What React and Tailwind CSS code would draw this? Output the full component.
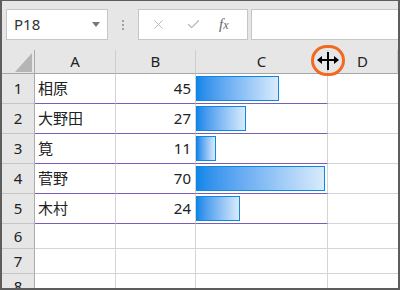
import { X, Check } from 'lucide-react';

const rows = [
  { n: 1, name: '相原', v: 45 },
  { n: 2, name: '大野田', v: 27 },
  { n: 3, name: '筧', v: 11 },
  { n: 4, name: '菅野', v: 70 },
  { n: 5, name: '木村', v: 24 },
];

const font = { fontFamily: '"Noto Sans", "Noto Sans CJK JP", sans-serif' };

function RowHead({ n, h }) {
  return (
    <div className={`${h} flex items-center justify-center bg-[#e6e6e6] border-r border-b border-r-[#ababab] border-b-[#c4c4c4] text-[15px] text-[#222]`}>
      {n}
    </div>
  );
}

export default function App() {
  return (
    <div
      className="relative w-[400px] h-[290px] overflow-hidden bg-[#e6e6e6] border-t border-l-2 border-r-2 border-b-2 border-[#5d5d5d] flex flex-col"
      style={font}
    >
      {/* ツールバー */}
      <div className="flex items-start pt-[8px] pb-[10px] h-[49px] shrink-0">
        <div className="ml-[4px] w-[102px] h-[31px] bg-white border border-[#c6c6c6] flex items-center pl-[7px] pr-[7px] text-[15px] text-[#333]">
          <span className="flex-1">P18</span>
          <span className="w-0 h-0 border-l-[4px] border-r-[4px] border-t-[5px] border-l-transparent border-r-transparent border-t-[#777]" />
        </div>
        <div className="w-[30px] h-[31px] flex flex-col items-center justify-center gap-[2px]">
          <span className="w-[2px] h-[2px] bg-[#a0a0a0]" />
          <span className="w-[2px] h-[2px] bg-[#a0a0a0]" />
          <span className="w-[2px] h-[2px] bg-[#a0a0a0]" />
        </div>
        <div className="w-[110px] h-[31px] bg-white border border-[#c6c6c6] flex items-center pl-[12px] text-[#b8b8b8]">
          <X size={15} strokeWidth={1.5} />
          <Check size={15} strokeWidth={2} className="ml-[20px]" />
          <span className="ml-[18px] text-[15px] italic text-[#666]" style={{ fontFamily: '"Liberation Serif", serif' }}>
            f<span className="text-[12px]">x</span>
          </span>
        </div>
        <div className="ml-[3px] flex-1 h-[31px] bg-white border-t border-b border-l border-[#c6c6c6]" />
      </div>

      {/* シート */}
      <div className="flex-1 bg-white grid grid-cols-[33px_81px_80px_132px_1fr] content-start text-[15px] text-[#222]">
        {/* 列見出し */}
        <div className="h-[24px] bg-[#e6e6e6] border-r border-b border-r-[#ababab] border-b-[#a6a6a6] flex items-end justify-end pr-[2px] pb-[1px]">
          <span className="w-[17px] h-[19px] bg-[#b5b5b5] [clip-path:polygon(100%_0,100%_100%,0_100%)]" />
        </div>
        {['A', 'B', 'C', 'D'].map((c) => (
          <div key={c} className="h-[24px] bg-[#e6e6e6] border-r border-b border-r-[#cfcfcf] border-b-[#a6a6a6] flex items-center justify-center">
            {c}
          </div>
        ))}

        {rows.map((r) => (
          <div key={r.n} className="contents">
            <RowHead n={r.n} h="h-[30px]" />
            <div className="h-[30px] border-r border-b border-r-[#d4d4d4] border-b-[#7b5cbc] flex items-center pl-[3px]">
              {r.name}
            </div>
            <div className="h-[30px] border-r border-b border-r-[#d4d4d4] border-b-[#7b5cbc] flex items-center justify-end pr-[4px]">
              {r.v}
            </div>
            <div className="h-[30px] border-r border-b border-r-[#d4d4d4] border-b-[#7b5cbc] pt-[2px] pb-[2px]">
              <div
                className="h-full border border-[#0b87e9] bg-linear-to-r from-[#0b87e9] to-[#d9ebfb]"
                style={{ width: Math.round(r.v * 1.84) }}
              />
            </div>
            <div className="h-[30px] border-b border-[#d4d4d4]" />
          </div>
        ))}

        {[6, 7, 8].map((n) => (
          <div key={n} className="contents">
            <RowHead n={n} h="h-[25px]" />
            <div className="h-[25px] border-r border-b border-[#d4d4d4]" />
            <div className="h-[25px] border-r border-b border-[#d4d4d4]" />
            <div className="h-[25px] border-r border-b border-[#d4d4d4]" />
            <div className="h-[25px] border-b border-[#d4d4d4]" />
          </div>
        ))}
      </div>

      {/* 列幅変更カーソル */}
      <div className="absolute left-[309px] top-[44px] w-[34px] h-[31px] rounded-full border-[3px] border-[#f26a21] flex items-center justify-center">
        <svg width="24" height="22" viewBox="0 0 24 22">
          <path d="M12 2v18" stroke="#000" strokeWidth="2" />
          <path d="M3 10h18" stroke="#000" strokeWidth="2" />
          <path d="M1 10l5-4v8z" fill="#000" />
          <path d="M23 10l-5-4v8z" fill="#000" />
        </svg>
      </div>
    </div>
  );
}
